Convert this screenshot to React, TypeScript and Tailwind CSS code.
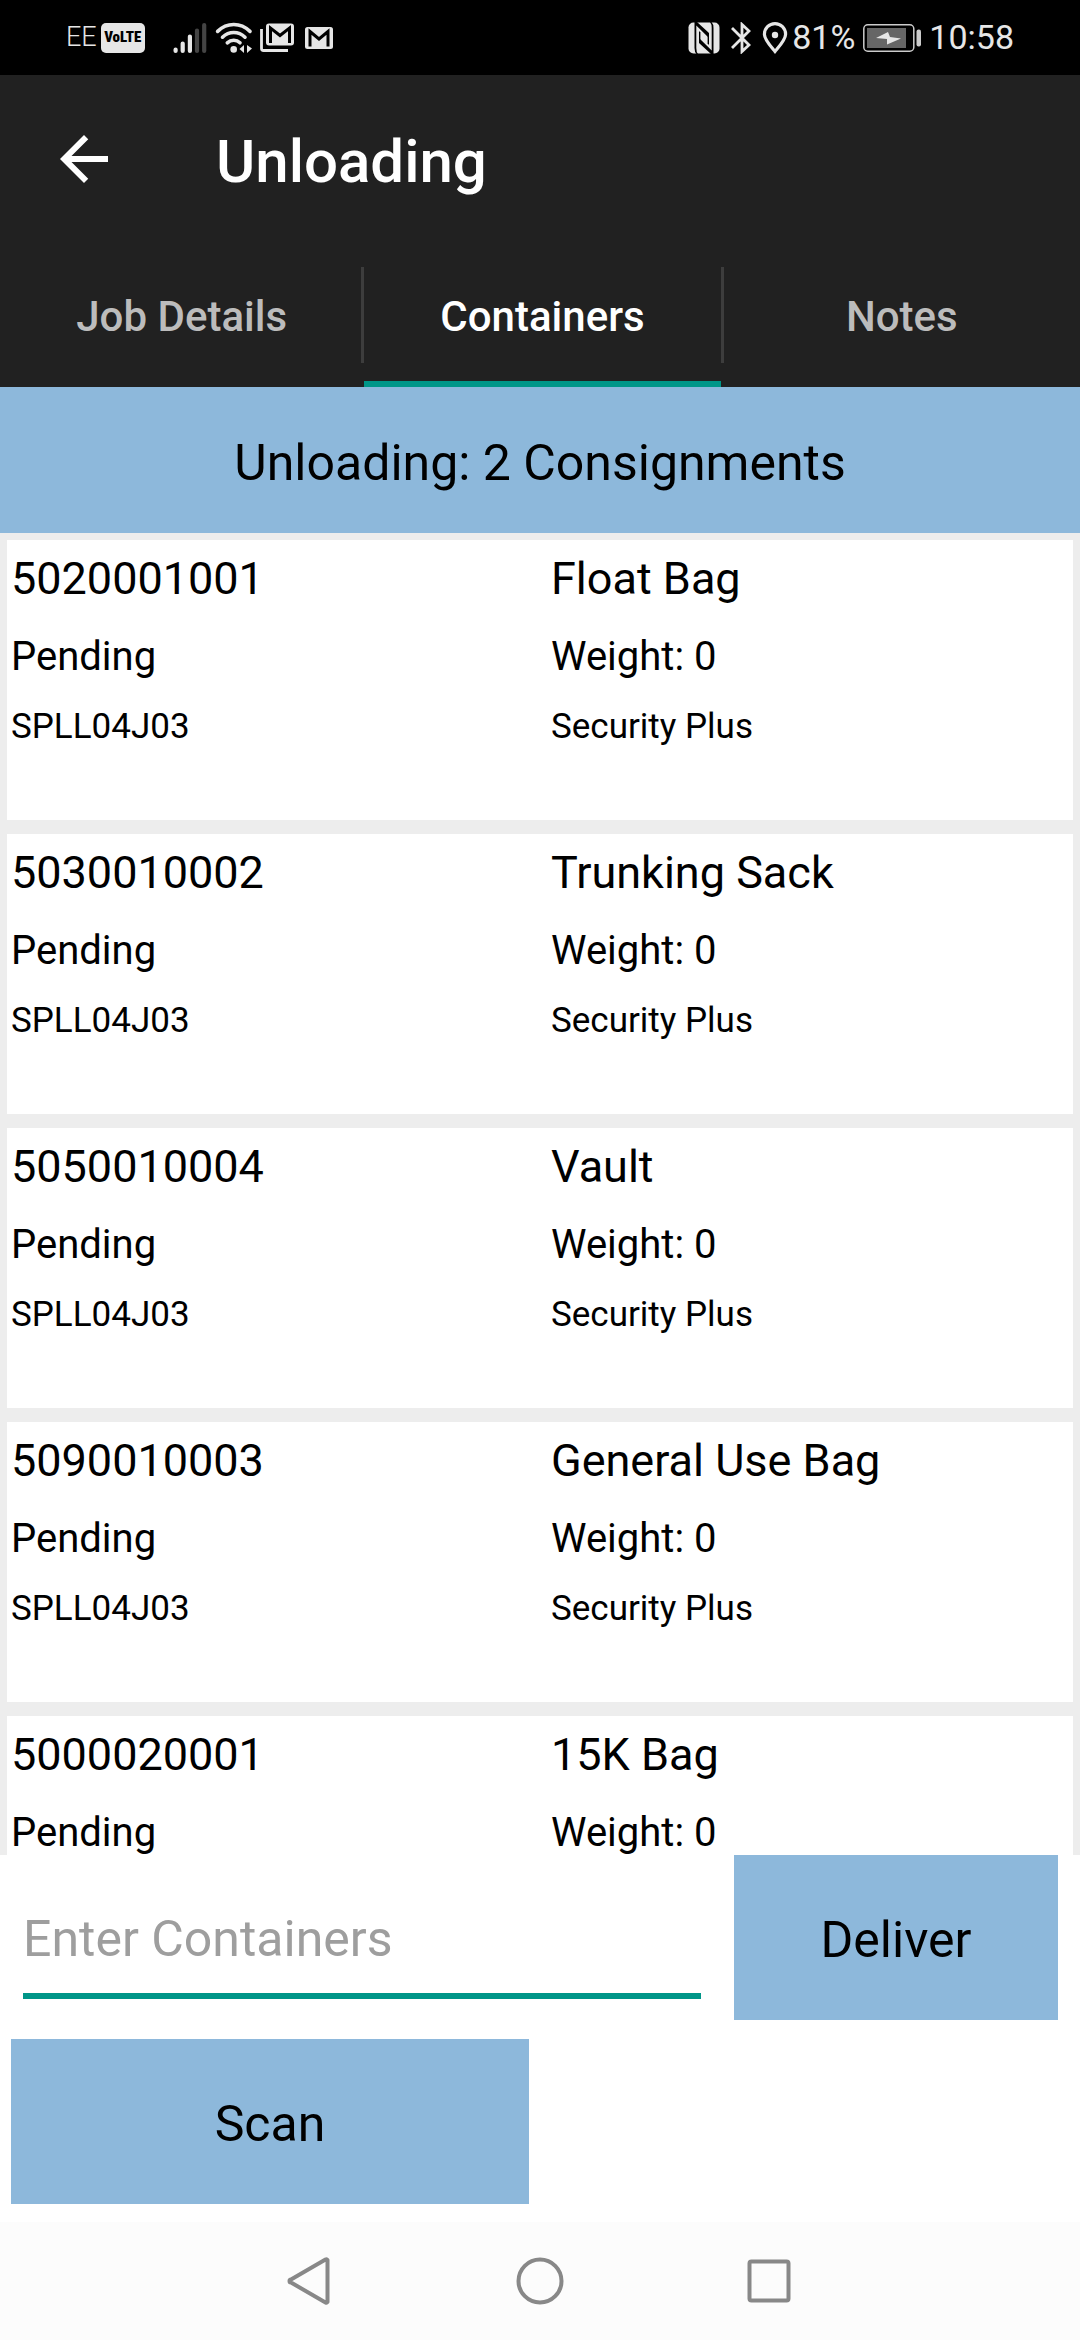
import { useState } from "react";
import { clsx } from "clsx";

const TABS = ["Job Details", "Containers", "Notes"];

const CONTAINERS = [
  { barcode: "5020001001", type: "Float Bag" },
  { barcode: "5030010002", type: "Trunking Sack" },
  { barcode: "5050010004", type: "Vault" },
  { barcode: "5090010003", type: "General Use Bag" },
  { barcode: "5000020001", type: "15K Bag" },
];

function SignalIcon() {
  return (
    <svg className="w-[34px] h-[32px]" viewBox="0 0 34 32" fill="none" strokeWidth="4.2" strokeLinecap="round">
      <path d="M2.6 27.6v1.4M9.7 21.5V29M16.9 14.5V29" stroke="#e6e6e6" />
      <path d="M24 8.5V29M31.2 3V29" stroke="#444" />
    </svg>
  );
}

function WifiIcon() {
  return (
    <svg className="w-[38px] h-[32px]" viewBox="0 0 38 32" fill="none" stroke="#e6e6e6" strokeWidth="3.6" strokeLinecap="round">
      <path d="M2.6 9.4C12 .2 25.5 .2 35 9.4" />
      <path d="M7.5 15.2C14 9 23.5 9 30 15.2" />
      <path d="M12.3 20.8C16 17.4 21.5 17.4 25 20.8" />
      <circle cx="18.7" cy="27.4" r="3.3" fill="#e6e6e6" stroke="none" />
      <path d="M29 23v8l-4.5-4zM32 23v8l5-4.5z" fill="#e6e6e6" stroke="none" />
    </svg>
  );
}

function MailStackIcon() {
  return (
    <svg className="w-[34px] h-[30px]" viewBox="0 0 34 30" fill="none">
      <path d="M1.5 6v19.5q0 2 2 2H28" stroke="#e6e6e6" strokeWidth="2.8" />
      <rect x="6" y="0.5" width="28" height="22" rx="3" fill="#e6e6e6" />
      <path d="M10.5 20V5l9.5 7.5L29.5 5v15" stroke="#000" strokeWidth="3" />
    </svg>
  );
}

function MailIcon() {
  return (
    <svg className="w-[28px] h-[22px]" viewBox="0 0 28 22" fill="none">
      <rect width="28" height="22" rx="2.5" fill="#e6e6e6" />
      <path d="M5 19.5V4.5l9 7.5 9-7.5v15" stroke="#000" strokeWidth="3" />
    </svg>
  );
}

function NfcIcon() {
  return (
    <svg className="w-[32px] h-[32px]" viewBox="0 0 32 32" fill="#000">
      <rect x="0.5" y="0.5" width="31" height="31" rx="5" fill="#e6e6e6" />
      <path d="M6.5 0H9l12 11v5L8.3 3.6V26q0 4 1.7 6H8.5q-2-2-2-6z" />
      <path d="M25.5 32H23L11 21v-5l12.7 12.4V6q0-4-1.7-6h1.5q2 2 2 6z" />
      <path d="M11 9v9h1.4v-7.5z" />
      <path d="M21 23V14h-1.4v7.5z" />
    </svg>
  );
}

function BluetoothIcon() {
  return (
    <svg className="w-[20px] h-[32px]" viewBox="0 0 20 32" fill="none" stroke="#e6e6e6" strokeWidth="2.8">
      <path d="M1 6l17 17-7 6.5V2.5L18 9 1 26" />
    </svg>
  );
}

function PinIcon() {
  return (
    <svg className="w-[26px] h-[32px]" viewBox="0 0 26 32" fill="none">
      <path d="M13 29.5C8 23.5 2.4 17.5 2.4 12.2a10.6 10.6 0 0 1 21.2 0C23.6 17.5 18 23.5 13 29.5z" stroke="#e6e6e6" strokeWidth="3.2" />
      <circle cx="13" cy="13" r="3.2" fill="#e6e6e6" />
    </svg>
  );
}

function BatteryIcon() {
  return (
    <svg className="w-[58px] h-[28px]" viewBox="0 0 58 28" fill="none">
      <rect x="0.8" y="0.8" width="50" height="26.4" rx="4" stroke="#ccc" strokeWidth="1.5" />
      <rect x="4" y="4" width="39" height="20" fill="#666" />
      <path d="M25 8L13 14l11 1v5.5L38 14.5 27 13z" fill="#e6e6e6" />
      <rect x="53.5" y="5.5" width="4.5" height="17" rx="2" fill="#ccc" />
    </svg>
  );
}

function StatusBar() {
  return (
    <div className="h-[75px] shrink-0 bg-black text-[#e6e6e6] flex items-center justify-between px-[66px]">
      <div className="flex items-center">
        <span className="text-[27px] font-light">EE</span>
        <span className="ml-[4px] mr-[28px] w-[44px] h-[30px] rounded-[5px] bg-[#e6e6e6] text-black flex items-center justify-center font-['Roboto_Condensed','Liberation_Sans_Narrow',Roboto,sans-serif] text-[15px] font-black">
          VoLTE
        </span>
        <SignalIcon />
        <span className="ml-[8px] mr-[7px]">
          <WifiIcon />
        </span>
        <MailStackIcon />
        <span className="ml-[11px]">
          <MailIcon />
        </span>
      </div>
      <div className="flex items-center text-[34px]">
        <NfcIcon />
        <span className="mx-[11px]">
          <BluetoothIcon />
        </span>
        <PinIcon />
        <span className="ml-[4px] mr-[8px]">81%</span>
        <BatteryIcon />
        <span className="ml-[8px]">10:58</span>
      </div>
    </div>
  );
}

export default function App() {
  const [tab, setTab] = useState("Containers");
  const [entry, setEntry] = useState("");

  return (
    <div className="h-screen flex flex-col bg-white text-black font-[Roboto,sans-serif] overflow-hidden">
      <StatusBar />

      {/* App bar */}
      <header className="bg-[#212121] text-white shrink-0">
        <div className="h-[168px] flex items-center pl-12 gap-24">
          <button aria-label="Back">
            <svg className="w-[72px] h-[72px]" viewBox="0 0 24 24" fill="currentColor">
              <path d="M20 11H7.83l5.59-5.59L12 4l-8 8 8 8 1.41-1.41L7.83 13H20v-2z" />
            </svg>
          </button>
          <h1 className="text-[60px] font-medium pt-1.5">Unloading</h1>
        </div>
        <nav className="h-[144px] flex pl-0.5">
          {TABS.map((name, i) => (
            <div key={name} className="flex-1 flex items-center">
              {i > 0 && <div className="w-[3px] h-24 bg-[#3d3d3d]" />}
              <button
                onClick={() => setTab(name)}
                className={clsx(
                  "flex-1 h-full border-b-[6px] pt-2 text-[42px] font-medium",
                  tab === name ? "border-[#009688] text-white" : "border-transparent text-[#bcbcbc]"
                )}
              >
                {name}
              </button>
            </div>
          ))}
        </nav>
      </header>

      <h2 className="h-[146px] shrink-0 bg-[#8db8db] flex items-center justify-center pt-1.5 text-[50px]">
        Unloading: 2 Consignments
      </h2>

      {/* Container list */}
      <ul className="flex-1 min-h-0 overflow-y-auto [scrollbar-width:none] bg-[#ededed] p-[7px] flex flex-col gap-[14px]">
        {CONTAINERS.map((c) => (
          <li
            key={c.barcode}
            className="h-[280px] shrink-0 bg-white px-1 pt-[10px] grid grid-cols-2 content-start gap-x-[22px] gap-y-[27px]"
          >
            <span className="text-[45px] leading-[58px]">{c.barcode}</span>
            <span className="text-[45px] leading-[58px]">{c.type}</span>
            <span className="text-[40px] leading-[44px]">Pending</span>
            <span className="text-[40px] leading-[44px]">Weight: 0</span>
            <span className="text-[35px] leading-[42px]">SPLL04J03</span>
            <span className="text-[35px] leading-[42px]">Security Plus</span>
          </li>
        ))}
      </ul>

      {/* Entry form */}
      <form className="shrink-0 text-[50px] pb-[18px]" onSubmit={(e) => e.preventDefault()}>
        <div className="flex items-start pl-[23px] pr-[22px] gap-[33px]">
          <input
            type="text"
            aria-label="Enter Containers"
            placeholder="Enter Containers"
            value={entry}
            onChange={(e) => setEntry(e.target.value)}
            className="flex-1 min-w-0 h-[144px] pt-[30px] border-b-[6px] border-[#009688] outline-none placeholder:text-[#9e9e9e]"
          />
          <button type="submit" className="w-[324px] h-[165px] pt-1.5 bg-[#8db8db]">
            Deliver
          </button>
        </div>
        <div className="grid grid-cols-2 gap-[22px] px-[11px] pt-[19px]">
          <button type="button" className="h-[165px] pt-1.5 bg-[#8db8db]">
            Scan
          </button>
        </div>
      </form>

      {/* System navigation */}
      <div className="h-[118px] shrink-0 bg-[#fcfcfc] flex items-center justify-center gap-[181px]">
        <button aria-label="System back">
          <svg className="w-12 h-12" viewBox="0 0 48 48" fill="none" stroke="#888" strokeWidth="4" strokeLinejoin="round">
            <path d="M40.5 3v42a1.5 1.5 0 0 1-2 .5L4 25.5a1.5 1.5 0 0 1 0-3L38.5 2.5a1.5 1.5 0 0 1 2 .5z" />
          </svg>
        </button>
        <button aria-label="System home">
          <svg className="w-12 h-12" viewBox="0 0 48 48" fill="none" stroke="#888" strokeWidth="4">
            <circle cx="24" cy="24" r="21.5" />
          </svg>
        </button>
        <button aria-label="Recent apps">
          <svg className="w-12 h-12" viewBox="0 0 48 48" fill="none" stroke="#888" strokeWidth="4">
            <rect x="4.5" y="4.5" width="39" height="39" rx="2" />
          </svg>
        </button>
      </div>
    </div>
  );
}
